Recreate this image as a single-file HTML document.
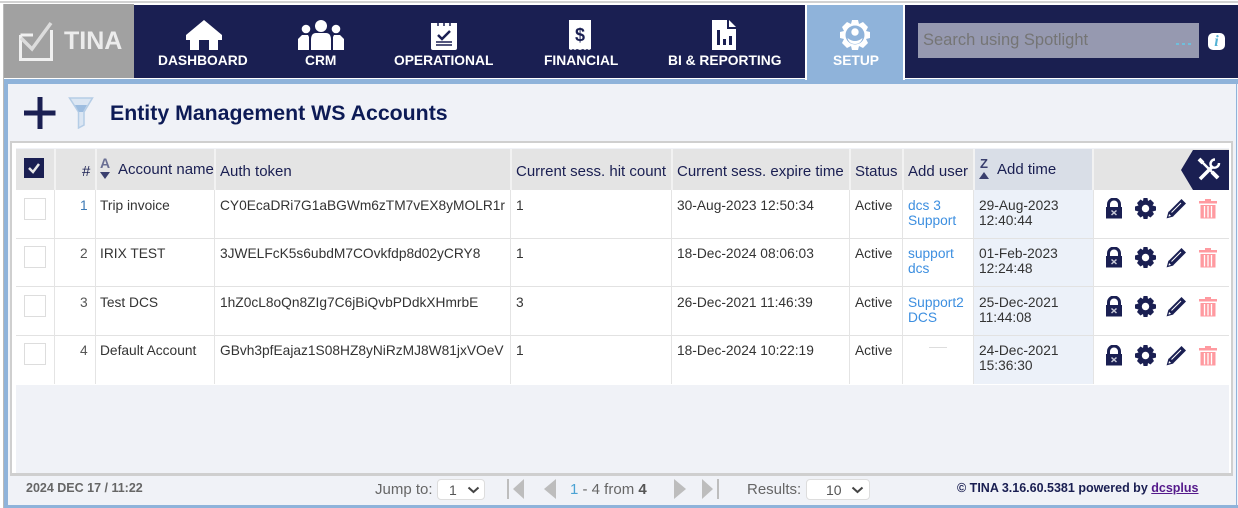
<!DOCTYPE html>
<html><head><meta charset="utf-8"><style>
*{box-sizing:border-box}
html,body{margin:0;padding:0;width:1238px;height:508px;overflow:hidden;background:#fff;font-family:"Liberation Sans",Arial,sans-serif}
.a{position:absolute}
.t{position:absolute;white-space:nowrap;font-size:13.75px;line-height:15px;color:#333}
.h{position:absolute;white-space:nowrap;font-size:15px;line-height:17px;color:#1a1f52}
.n{position:absolute;white-space:nowrap;font-size:13.8px;line-height:16px;font-weight:bold;color:#fff;text-align:center}
.l{color:#3d8fe0}
.v{position:absolute;width:1px;top:190px;height:194px;background:#e4e4e4}
.vh{position:absolute;width:2px;top:149px;height:41px;background:#f2f2f2}
.hl{position:absolute;left:16px;width:1213px;height:1px;background:#e2e2e2}
.cb{position:absolute;left:24px;width:22px;height:22px;background:#fff;border:1px solid #ddd}
svg{position:absolute;display:block}
</style></head><body>
<div class="a" style="left:0;top:1px;width:1238px;height:2px;background:#d2d2d2"></div>
<div class="a" style="left:3px;top:4px;width:1px;height:504px;background:#b9b9b9"></div>
<div class="a" style="left:4px;top:79px;width:1234px;height:429px;background:#f0f2f7"></div>
<div class="a" style="left:4px;top:79px;width:4px;height:429px;background:#8fb3da"></div>
<div class="a" style="left:8px;top:79px;width:1230px;height:5px;background:#8fb3da"></div>
<div class="a" style="left:4px;top:505px;width:1234px;height:3px;background:#8fb3da"></div>
<div class="a" style="left:1236px;top:84px;width:1px;height:424px;background:#8fb3da"></div>

<div class="a" style="left:4px;top:4px;width:130px;height:74px;background:#a1a1a1"></div>
<svg style="left:18px;top:20px" width="36" height="42" viewBox="0 0 36 42"><path d="M2.500 15H15M2.500 15V39.500H33.500V10" fill="none" stroke="#f0f0f0" stroke-width="3"/><path d="M3 18L14 29L33 3" fill="none" stroke="#dcdcdc" stroke-width="3.500"/></svg>
<div class="a" style="left:64px;top:27px;font-size:25px;line-height:28px;font-weight:bold;color:#ececec">TINA</div>

<div class="a" style="left:134px;top:5px;width:671px;height:73px;background:#1a1f52"></div>
<div class="a" style="left:134px;top:78px;width:671px;height:1px;background:#fff"></div>
<div class="a" style="left:805px;top:5px;width:2px;height:75px;background:#fff"></div>
<div class="a" style="left:807px;top:5px;width:96px;height:75px;background:#8fb3da"></div>
<div class="a" style="left:903px;top:5px;width:2px;height:75px;background:#fff"></div>
<div class="a" style="left:905px;top:5px;width:333px;height:73px;background:#1a1f50"></div>
<div class="a" style="left:905px;top:78px;width:333px;height:1px;background:#fff"></div>

<svg style="left:186px;top:20px" width="36" height="30" viewBox="0 0 36 30"><path d="M18 0L36 15V20H32V30H23V20H13V30H4V20H0V15Z" fill="#fff"/></svg>
<svg style="left:298px;top:20px" width="46" height="30" viewBox="0 0 46 30"><g fill="#fff"><circle cx="23" cy="6" r="6"/><circle cx="8" cy="9" r="4.300"/><circle cx="38" cy="9" r="4.300"/><path d="M13 30V20Q13 13 18 13H28Q33 13 33 20V30Z"/><path d="M0 30V19L4 15H10L11 17V30Z"/><path d="M46 30V19L42 15H36L35 17V30Z"/></g></svg>
<svg style="left:430px;top:20px" width="28" height="30" viewBox="0 0 28 30"><path d="M1 3H27V28Q27 30 25 30H3Q1 30 1 28Z" fill="#fff"/><g stroke="#1a1f52" stroke-width="1.500" fill="none"><path d="M8 2V6M14 2V6M20 2V6"/><path d="M8 15L12 19L20 11" stroke-width="2.500"/><path d="M6 22H22M6 25H22"/></g></svg>
<svg style="left:569px;top:20px" width="22" height="30" viewBox="0 0 22 30"><path d="M0 0H22V29L20 30L18 29L16 30L14 29L11 30L8 29L6 30L4 29L2 30L0 29Z" fill="#fff"/><text x="11" y="21" font-family="Liberation Sans" font-weight="bold" font-size="18" text-anchor="middle" fill="#1a1f52">$</text></svg>
<svg style="left:712px;top:20px" width="24" height="30" viewBox="0 0 24 30"><path d="M0 0H15V9H24V30H0Z" fill="#fff"/><path d="M17 0L24 7H17Z" fill="#fff"/><path d="M5 10h3v15h-3zM11 19h3v6h-3zM17 16h3v9h-3z" fill="#1a1f52"/></svg>
<svg style="left:840px;top:20px" width="30" height="30" viewBox="0 0 30 30"><path d="M12 0H18L19 4L23 2L28 7L26 11L30 12V18L26 19L28 23L23 28L19 26L18 30H12L11 26L7 28L2 23L4 19L0 18V12L4 11L2 7L7 2L11 4Z" fill="#fff"/><circle cx="15" cy="15" r="9.500" fill="#8fb3da"/><circle cx="15" cy="12" r="3.700" fill="#fff"/><path d="M7.500 18Q15 24 22.500 18Q21 24 15 24Q9 24 7.500 18Z" fill="#fff"/></svg>

<div class="n" style="left:158px;top:53px">DASHBOARD</div>
<div class="n" style="left:305px;top:53px">CRM</div>
<div class="n" style="left:394px;top:53px">OPERATIONAL</div>
<div class="n" style="left:544px;top:53px">FINANCIAL</div>
<div class="n" style="left:668px;top:53px">BI &amp; REPORTING</div>
<div class="n" style="left:833px;top:53px">SETUP</div>

<div class="a" style="left:918px;top:23px;width:281px;height:35px;background:#9699b0"></div>
<div class="a" style="left:923px;top:31px;font-size:16.500px;line-height:18px;color:#757575;white-space:nowrap">Search using Spotlight</div>
<div class="a" style="left:1176px;top:43px;width:3px;height:2px;background:#6fbfdc"></div>
<div class="a" style="left:1182px;top:43px;width:3px;height:2px;background:#6fbfdc"></div>
<div class="a" style="left:1188px;top:43px;width:3px;height:2px;background:#6fbfdc"></div>
<div class="a" style="left:1208px;top:33px;width:17px;height:17px;border-radius:5px;background:#fff;color:#55b3d5;font:italic bold 16px/17px 'Liberation Serif',serif;text-align:center">i</div>

<svg style="left:24px;top:97px" width="32" height="32" viewBox="0 0 32 32"><path d="M13.500 0h5v13.500h13v5h-13v13.500h-5v-13.500h-13.500v-5h13.500z" fill="#1a1f52"/></svg>
<svg style="left:68px;top:97px" width="26" height="32" viewBox="0 0 26 32"><path d="M1.500 1H24.500L16 15V28L10.500 31V15Z" fill="#dbe6f3" stroke="#b5cde6" stroke-width="1.500"/><path d="M7 8H19L15 15H11Z" fill="#9dbde0"/></svg>
<div class="a" style="left:110px;top:100px;font-size:21.300px;line-height:26px;font-weight:bold;color:#0d1b56;white-space:nowrap">Entity Management WS Accounts</div>

<div class="a" style="left:10px;top:141px;width:1223px;height:335px;border:2px solid #cfcfcf;border-bottom-width:3px;background:#f0f2f7"></div>
<div class="a" style="left:12px;top:143px;width:1219px;height:5px;background:#fff"></div>
<div class="a" style="left:12px;top:143px;width:4px;height:330px;background:#fff"></div>
<div class="a" style="left:1229px;top:143px;width:2px;height:330px;background:#fff"></div>

<div class="a" style="left:16px;top:149px;width:1213px;height:41px;background:#e4e4e4"></div>
<div class="a" style="left:973px;top:149px;width:119px;height:41px;background:#d9dee7"></div>
<div class="a" style="left:16px;top:190px;width:1213px;height:195px;background:#fff"></div>
<div class="a" style="left:973px;top:190px;width:120px;height:194px;background:#ecf1f9"></div>

<div class="hl" style="top:238px"></div><div class="hl" style="top:286px"></div><div class="hl" style="top:335px"></div>
<div class="v" style="left:54px"></div><div class="vh" style="left:54px"></div>
<div class="v" style="left:95px"></div><div class="vh" style="left:95px"></div>
<div class="v" style="left:214px"></div><div class="vh" style="left:214px"></div>
<div class="v" style="left:510px"></div><div class="vh" style="left:510px"></div>
<div class="v" style="left:671px"></div><div class="vh" style="left:671px"></div>
<div class="v" style="left:849px"></div><div class="vh" style="left:849px"></div>
<div class="v" style="left:902px"></div><div class="vh" style="left:902px"></div>
<div class="v" style="left:973px"></div><div class="vh" style="left:973px"></div>
<div class="v" style="left:1093px"></div><div class="vh" style="left:1092px"></div>

<div class="a" style="left:24px;top:158px;width:20px;height:20px;background:#1a1f52"></div>
<svg style="left:27px;top:162px" width="14" height="12" viewBox="0 0 14 12"><path d="M2 6L6 10L12 2" fill="none" stroke="#e8e8e8" stroke-width="2.500"/></svg>
<div class="h" style="left:82px;top:163px">#</div>
<div class="a" style="left:100px;top:156px;font:bold 14px/14px 'Liberation Sans',sans-serif;color:#6a6f93">A</div>
<svg style="left:100px;top:172px" width="10" height="7" viewBox="0 0 10 7"><path d="M0 0H10L5 7Z" fill="#3a3f6e"/></svg>
<div class="h" style="left:118px;top:161px">Account name</div>
<div class="h" style="left:220px;top:163px">Auth token</div>
<div class="h" style="left:516px;top:163px">Current sess. hit count</div>
<div class="h" style="left:677px;top:163px">Current sess. expire time</div>
<div class="h" style="left:855px;top:163px">Status</div>
<div class="h" style="left:908px;top:163px">Add user</div>
<div class="a" style="left:980px;top:157px;font:bold 13px/13px 'Liberation Sans',sans-serif;color:#3a3f6e">Z</div>
<svg style="left:979px;top:172px" width="10" height="7" viewBox="0 0 10 7"><path d="M0 7H10L5 0Z" fill="#3a3f6e"/></svg>
<div class="h" style="left:997px;top:161px">Add time</div>

<svg style="left:1181px;top:150px" width="48" height="40" viewBox="0 0 48 40"><path d="M12 0H48V40H12L0 20Z" fill="#1a1f52"/><g fill="none" stroke="#fff"><path d="M19 29L32 16" stroke-width="3.500"/><path d="M34 9.500A4.500 4.500 0 0 0 30 16A4.500 4.500 0 0 0 38 13" stroke-width="2.500"/><path d="M19 10L37 28" stroke-width="2.500"/><path d="M18 9L22 13" stroke-width="4"/><path d="M31 22L37 28" stroke-width="4"/></g></svg>

<div class="cb" style="top:198px"></div><div class="cb" style="top:246px"></div><div class="cb" style="top:295px"></div><div class="cb" style="top:343px"></div>

<div class="t" style="left:80px;top:198px;color:#3b79b5">1</div>
<div class="t" style="left:100px;top:198px">Trip invoice</div>
<div class="t" style="left:220px;top:198px">CY0EcaDRi7G1aBGWm6zTM7vEX8yMOLR1r</div>
<div class="t" style="left:516px;top:198px">1</div>
<div class="t" style="left:677px;top:198px">30-Aug-2023 12:50:34</div>
<div class="t" style="left:855px;top:198px">Active</div>
<div class="t l" style="left:908px;top:198px">dcs 3<br>Support</div>
<div class="t" style="left:979px;top:198px">29-Aug-2023<br>12:40:44</div>

<div class="t" style="left:80px;top:246px;color:#555">2</div>
<div class="t" style="left:100px;top:246px">IRIX TEST</div>
<div class="t" style="left:220px;top:246px">3JWELFcK5s6ubdM7COvkfdp8d02yCRY8</div>
<div class="t" style="left:516px;top:246px">1</div>
<div class="t" style="left:677px;top:246px">18-Dec-2024 08:06:03</div>
<div class="t" style="left:855px;top:246px">Active</div>
<div class="t l" style="left:908px;top:246px">support<br>dcs</div>
<div class="t" style="left:979px;top:246px">01-Feb-2023<br>12:24:48</div>

<div class="t" style="left:80px;top:295px;color:#555">3</div>
<div class="t" style="left:100px;top:295px">Test DCS</div>
<div class="t" style="left:220px;top:295px">1hZ0cL8oQn8ZIg7C6jBiQvbPDdkXHmrbE</div>
<div class="t" style="left:516px;top:295px">3</div>
<div class="t" style="left:677px;top:295px">26-Dec-2021 11:46:39</div>
<div class="t" style="left:855px;top:295px">Active</div>
<div class="t l" style="left:908px;top:295px">Support2<br>DCS</div>
<div class="t" style="left:979px;top:295px">25-Dec-2021<br>11:44:08</div>

<div class="t" style="left:80px;top:343px;color:#555">4</div>
<div class="t" style="left:100px;top:343px">Default Account</div>
<div class="t" style="left:220px;top:343px">GBvh3pfEajaz1S08HZ8yNiRzMJ8W81jxVOeV</div>
<div class="t" style="left:516px;top:343px">1</div>
<div class="t" style="left:677px;top:343px">18-Dec-2024 10:22:19</div>
<div class="t" style="left:855px;top:343px">Active</div>
<div class="a" style="left:929px;top:347px;width:18px;height:1px;background:#ddd"></div>
<div class="t" style="left:979px;top:343px">24-Dec-2021<br>15:36:30</div>

<svg style="left:1105px;top:198px" width="18" height="21" viewBox="0 0 18 21"><path d="M3.500 9V6.500A5.500 5.500 0 0 1 14.500 6.500V9" fill="none" stroke="#1a1f52" stroke-width="3"/><rect x="1" y="9" width="16" height="11.500" fill="#1a1f52"/><path d="M6.500 12.500L11.500 17M11.500 12.500L6.500 17" stroke="#c9cbd8" stroke-width="1.500"/></svg>
<svg style="left:1135px;top:198px" width="21" height="21" viewBox="0 0 21 21"><path d="M8.500 0H12.500L13 3L15.500 1.500L19 5L17.500 7.500L21 8.500V12.500L17.500 13.500L19 16L15.500 19.500L13 18L12.500 21H8.500L8 18L5.500 19.500L2 16L3.500 13.500L0 12.500V8.500L3.500 7.500L2 5L5.500 1.500L8 3Z" fill="#1a1f52"/><circle cx="10.500" cy="10.500" r="3.700" fill="#fff"/></svg>
<svg style="left:1166px;top:198px" width="21" height="21" viewBox="0 0 21 21"><path d="M15.500 1L20 5.500L7 18.500L2.500 14Z" fill="#1a1f52"/><path d="M5.500 14.500L15 5" stroke="#fff" stroke-width="1"/><path d="M1.500 19.500L2.800 14.800L6.200 18.200Z" fill="#fff" stroke="#1a1f52" stroke-width="1.300"/></svg>
<svg style="left:1198px;top:198px" width="20" height="21" viewBox="0 0 20 21"><path d="M1 3H19V5.500H1ZM7 1H13V3H7Z" fill="#ff9aa0"/><path d="M2.500 7H17.500V20.500H2.500Z" fill="#ff9aa0"/><path d="M6.500 8V19.500M10 8V19.500M13.500 8V19.500" stroke="#fff" stroke-width="1.300"/></svg>

<svg style="left:1105px;top:247px" width="18" height="21" viewBox="0 0 18 21"><path d="M3.500 9V6.500A5.500 5.500 0 0 1 14.500 6.500V9" fill="none" stroke="#1a1f52" stroke-width="3"/><rect x="1" y="9" width="16" height="11.500" fill="#1a1f52"/><path d="M6.500 12.500L11.500 17M11.500 12.500L6.500 17" stroke="#c9cbd8" stroke-width="1.500"/></svg>
<svg style="left:1135px;top:247px" width="21" height="21" viewBox="0 0 21 21"><path d="M8.500 0H12.500L13 3L15.500 1.500L19 5L17.500 7.500L21 8.500V12.500L17.500 13.500L19 16L15.500 19.500L13 18L12.500 21H8.500L8 18L5.500 19.500L2 16L3.500 13.500L0 12.500V8.500L3.500 7.500L2 5L5.500 1.500L8 3Z" fill="#1a1f52"/><circle cx="10.500" cy="10.500" r="3.700" fill="#fff"/></svg>
<svg style="left:1166px;top:247px" width="21" height="21" viewBox="0 0 21 21"><path d="M15.500 1L20 5.500L7 18.500L2.500 14Z" fill="#1a1f52"/><path d="M5.500 14.500L15 5" stroke="#fff" stroke-width="1"/><path d="M1.500 19.500L2.800 14.800L6.200 18.200Z" fill="#fff" stroke="#1a1f52" stroke-width="1.300"/></svg>
<svg style="left:1198px;top:247px" width="20" height="21" viewBox="0 0 20 21"><path d="M1 3H19V5.500H1ZM7 1H13V3H7Z" fill="#ff9aa0"/><path d="M2.500 7H17.500V20.500H2.500Z" fill="#ff9aa0"/><path d="M6.500 8V19.500M10 8V19.500M13.500 8V19.500" stroke="#fff" stroke-width="1.300"/></svg>

<svg style="left:1105px;top:296px" width="18" height="21" viewBox="0 0 18 21"><path d="M3.500 9V6.500A5.500 5.500 0 0 1 14.500 6.500V9" fill="none" stroke="#1a1f52" stroke-width="3"/><rect x="1" y="9" width="16" height="11.500" fill="#1a1f52"/><path d="M6.500 12.500L11.500 17M11.500 12.500L6.500 17" stroke="#c9cbd8" stroke-width="1.500"/></svg>
<svg style="left:1135px;top:296px" width="21" height="21" viewBox="0 0 21 21"><path d="M8.500 0H12.500L13 3L15.500 1.500L19 5L17.500 7.500L21 8.500V12.500L17.500 13.500L19 16L15.500 19.500L13 18L12.500 21H8.500L8 18L5.500 19.500L2 16L3.500 13.500L0 12.500V8.500L3.500 7.500L2 5L5.500 1.500L8 3Z" fill="#1a1f52"/><circle cx="10.500" cy="10.500" r="3.700" fill="#fff"/></svg>
<svg style="left:1166px;top:296px" width="21" height="21" viewBox="0 0 21 21"><path d="M15.500 1L20 5.500L7 18.500L2.500 14Z" fill="#1a1f52"/><path d="M5.500 14.500L15 5" stroke="#fff" stroke-width="1"/><path d="M1.500 19.500L2.800 14.800L6.200 18.200Z" fill="#fff" stroke="#1a1f52" stroke-width="1.300"/></svg>
<svg style="left:1198px;top:296px" width="20" height="21" viewBox="0 0 20 21"><path d="M1 3H19V5.500H1ZM7 1H13V3H7Z" fill="#ff9aa0"/><path d="M2.500 7H17.500V20.500H2.500Z" fill="#ff9aa0"/><path d="M6.500 8V19.500M10 8V19.500M13.500 8V19.500" stroke="#fff" stroke-width="1.300"/></svg>

<svg style="left:1105px;top:345px" width="18" height="21" viewBox="0 0 18 21"><path d="M3.500 9V6.500A5.500 5.500 0 0 1 14.500 6.500V9" fill="none" stroke="#1a1f52" stroke-width="3"/><rect x="1" y="9" width="16" height="11.500" fill="#1a1f52"/><path d="M6.500 12.500L11.500 17M11.500 12.500L6.500 17" stroke="#c9cbd8" stroke-width="1.500"/></svg>
<svg style="left:1135px;top:345px" width="21" height="21" viewBox="0 0 21 21"><path d="M8.500 0H12.500L13 3L15.500 1.500L19 5L17.500 7.500L21 8.500V12.500L17.500 13.500L19 16L15.500 19.500L13 18L12.500 21H8.500L8 18L5.500 19.500L2 16L3.500 13.500L0 12.500V8.500L3.500 7.500L2 5L5.500 1.500L8 3Z" fill="#1a1f52"/><circle cx="10.500" cy="10.500" r="3.700" fill="#fff"/></svg>
<svg style="left:1166px;top:345px" width="21" height="21" viewBox="0 0 21 21"><path d="M15.500 1L20 5.500L7 18.500L2.500 14Z" fill="#1a1f52"/><path d="M5.500 14.500L15 5" stroke="#fff" stroke-width="1"/><path d="M1.500 19.500L2.800 14.800L6.200 18.200Z" fill="#fff" stroke="#1a1f52" stroke-width="1.300"/></svg>
<svg style="left:1198px;top:345px" width="20" height="21" viewBox="0 0 20 21"><path d="M1 3H19V5.500H1ZM7 1H13V3H7Z" fill="#ff9aa0"/><path d="M2.500 7H17.500V20.500H2.500Z" fill="#ff9aa0"/><path d="M6.500 8V19.500M10 8V19.500M13.500 8V19.500" stroke="#fff" stroke-width="1.300"/></svg>

<div class="a" style="left:26px;top:481px;font-size:12.500px;line-height:15px;font-weight:bold;color:#666;white-space:nowrap">2024 DEC 17 / 11:22</div>
<div class="a" style="left:375px;top:482px;font-size:15px;line-height:16px;color:#666;white-space:nowrap">Jump to:</div>
<div class="a" style="left:437px;top:479px;width:48px;height:21px;background:#fff;border:1px solid #ddd;border-radius:4px"></div>
<div class="a" style="left:449px;top:482px;font-size:14px;line-height:16px;color:#555">1</div>
<svg style="left:467px;top:486px" width="13" height="8" viewBox="0 0 13 8"><path d="M1.500 1.500L6.500 6L11.500 1.500" fill="none" stroke="#444" stroke-width="2"/></svg>
<svg style="left:507px;top:479px" width="22" height="21" viewBox="0 0 22 21"><path d="M0 0H2V20H0Z" fill="#bdbdbd"/><path d="M17 0V20L6 10Z" fill="#bdbdbd"/></svg>
<svg style="left:543px;top:479px" width="14" height="21" viewBox="0 0 14 21"><path d="M13 0V20L1 10Z" fill="#bdbdbd"/></svg>
<div class="a" style="left:570px;top:482px;font-size:15px;line-height:16px;color:#666;white-space:nowrap"><span style="color:#4ba3d4">1</span> - 4 from <b style="color:#555">4</b></div>
<svg style="left:673px;top:479px" width="14" height="21" viewBox="0 0 14 21"><path d="M1 0V20L13 10Z" fill="#bdbdbd"/></svg>
<svg style="left:702px;top:479px" width="22" height="21" viewBox="0 0 22 21"><path d="M0 0V20L11 10Z" fill="#bdbdbd"/><path d="M15 0H17V20H15Z" fill="#bdbdbd"/></svg>
<div class="a" style="left:747px;top:482px;font-size:15px;line-height:16px;color:#666;white-space:nowrap">Results:</div>
<div class="a" style="left:806px;top:479px;width:64px;height:21px;background:#fff;border:1px solid #ddd;border-radius:4px"></div>
<div class="a" style="left:826px;top:482px;font-size:14px;line-height:16px;color:#555">10</div>
<svg style="left:851px;top:486px" width="13" height="8" viewBox="0 0 13 8"><path d="M1.500 1.500L6.500 6L11.500 1.500" fill="none" stroke="#444" stroke-width="2"/></svg>
<div class="a" style="left:957px;top:481px;font-size:12.500px;line-height:15px;font-weight:bold;color:#1a1f52;white-space:nowrap">© TINA 3.16.60.5381 powered by <span style="color:#551a8b;text-decoration:underline">dcsplus</span></div>
</body></html>
